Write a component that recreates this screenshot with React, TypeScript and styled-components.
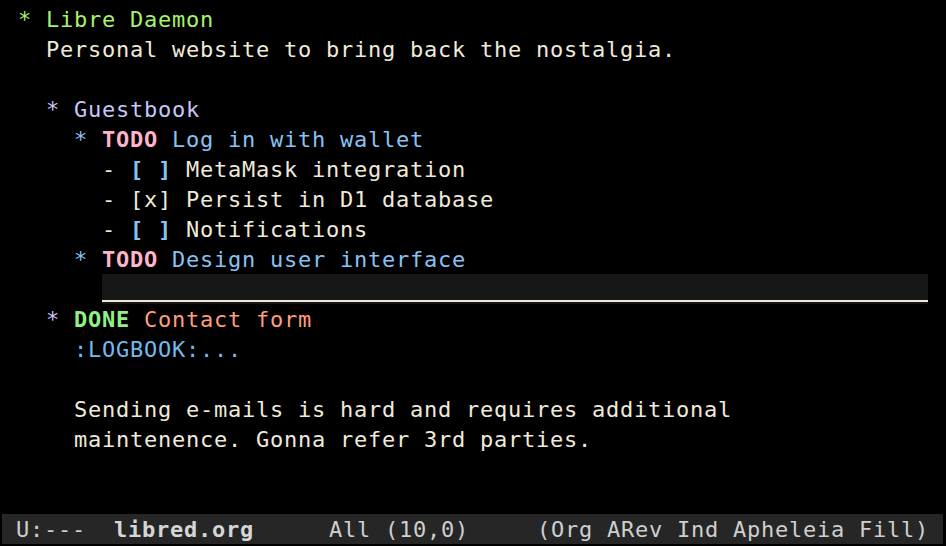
import React from "react";
import styled, { createGlobalStyle } from "styled-components";

const GlobalStyle = createGlobalStyle`
  html, body {
    margin: 0;
    padding: 0;
    background: #000;
    height: 100%;
  }
  #root {
    height: 100%;
  }
`;

const COL = 14;

const Frame = styled.div`
  height: 546px;
  width: 946px;
  display: flex;
  flex-direction: column;
  background: #000;
  font-family: "DejaVu Sans Mono", "Liberation Mono", monospace;
  font-size: 22px;
  letter-spacing: 0.755px;
  overflow: hidden;
`;

const Buffer = styled.div`
  flex: 1;
  display: flex;
  flex-direction: column;
  padding: 5px 18px 0 18px;
`;

const Line = styled.div<{ $indent?: number }>`
  height: 30px;
  line-height: 30px;
  white-space: pre;
  color: #efeadb;
  padding-left: ${(p) => (p.$indent ?? 0) * COL}px;
`;

const HlLine = styled.div<{ $indent: number }>`
  height: 30px;
  margin-left: ${(p) => p.$indent * COL}px;
  width: ${(p) => (65 - p.$indent) * COL}px;
  margin-top: -1px;
  margin-bottom: 1px;
  background: linear-gradient(
    to bottom,
    #171717 0 26px,
    #efe9d6 26px 28px,
    #171717 28px 30px
  );
`;

type FaceKind =
  | "h1"
  | "h2"
  | "h3"
  | "todo"
  | "done"
  | "checkbox"
  | "doneTitle"
  | "drawer"
  | "text";

const faceColors: Record<FaceKind, string> = {
  h1: "#a6f36c",
  h2: "#c7c5fa",
  h3: "#88c2f3",
  todo: "#ffb4c8",
  done: "#8ff08a",
  checkbox: "#88c2f3",
  doneTitle: "#ff9e7b",
  drawer: "#72b9ee",
  text: "#efeadb",
};

const Face = styled.span<{ $kind: FaceKind; $bold?: boolean }>`
  color: ${(p) => faceColors[p.$kind]};
  font-weight: ${(p) => (p.$bold ? 700 : 400)};
`;

const ModeLine = styled.div`
  height: 30px;
  margin: 0 3px 2px 2px;
  background: #262626;
  color: #cfcfcf;
  display: flex;
  align-items: center;
  white-space: pre;
  padding: 1px 14px 0 14px;
  box-sizing: border-box;
  line-height: 30px;
`;

const ModeItem = styled.span<{ $gap?: number; $bold?: boolean }>`
  margin-left: ${(p) => p.$gap ?? 0}px;
  font-weight: ${(p) => (p.$bold ? 700 : 400)};
  color: ${(p) => (p.$bold ? "#d6d6d6" : "#cfcfcf")};
`;

const Spacer = styled.span`
  flex: 1;
`;

export default function App() {
  return (
    <>
      <GlobalStyle />
      <Frame>
        <Buffer>
          <Line>
            <Face $kind="h1">* Libre Daemon</Face>
          </Line>
          <Line $indent={2}>Personal website to bring back the nostalgia.</Line>
          <Line />
          <Line $indent={2}>
            <Face $kind="h2">* Guestbook</Face>
          </Line>
          <Line $indent={4}>
            <Face $kind="h3">* </Face>
            <Face $kind="todo" $bold>
              TODO
            </Face>
            <Face $kind="h3"> Log in with wallet</Face>
          </Line>
          <Line $indent={6}>
            {"- "}
            <Face $kind="checkbox" $bold>
              [ ]
            </Face>
            {" MetaMask integration"}
          </Line>
          <Line $indent={6}>- [x] Persist in D1 database</Line>
          <Line $indent={6}>
            {"- "}
            <Face $kind="checkbox" $bold>
              [ ]
            </Face>
            {" Notifications"}
          </Line>
          <Line $indent={4}>
            <Face $kind="h3">* </Face>
            <Face $kind="todo" $bold>
              TODO
            </Face>
            <Face $kind="h3"> Design user interface</Face>
          </Line>
          <HlLine $indent={6} />
          <Line $indent={2}>
            <Face $kind="h2">* </Face>
            <Face $kind="done" $bold>
              DONE
            </Face>
            <Face $kind="doneTitle"> Contact form</Face>
          </Line>
          <Line $indent={4}>
            <Face $kind="drawer">:LOGBOOK:...</Face>
          </Line>
          <Line />
          <Line $indent={4}>Sending e-mails is hard and requires additional</Line>
          <Line $indent={4}>maintenence. Gonna refer 3rd parties.</Line>
        </Buffer>
        <ModeLine>
          <ModeItem>U:---</ModeItem>
          <ModeItem $gap={28} $bold>
            libred.org
          </ModeItem>
          <ModeItem $gap={75}>All (10,0)</ModeItem>
          <Spacer />
          <ModeItem>(Org ARev Ind Apheleia Fill)</ModeItem>
        </ModeLine>
      </Frame>
    </>
  );
}
